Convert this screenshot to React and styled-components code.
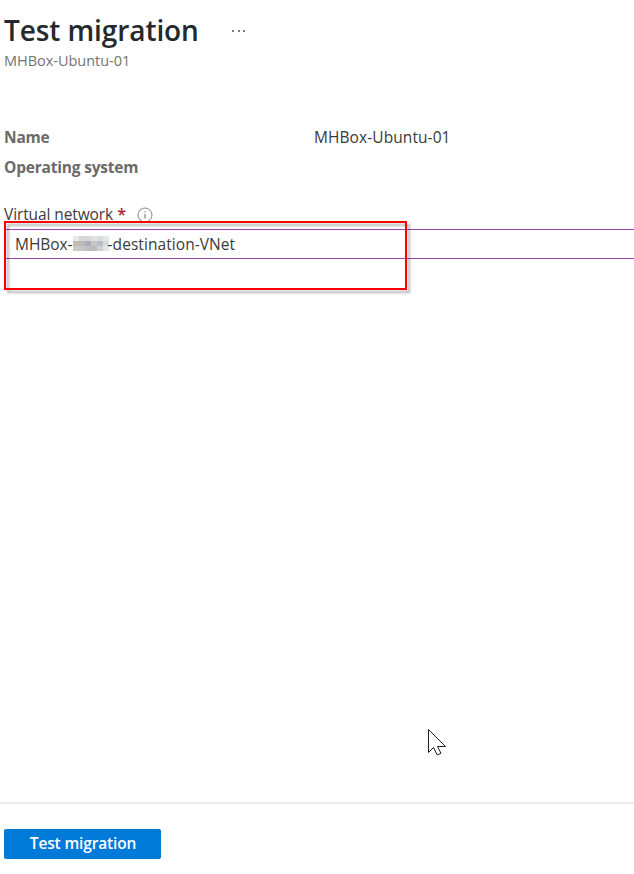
import React from 'react';
import styled, { createGlobalStyle } from 'styled-components';

const GlobalStyle = createGlobalStyle`
  * { box-sizing: border-box; }
  body { margin: 0; background: #fff; font-family: "Open Sans", "Noto Sans", sans-serif; color: #323130; }
`;

const Blade = styled.div`
  position: relative;
  display: flex;
  flex-direction: column;
  height: 874px;
  overflow: hidden;
  background: #fff;
`;

const Header = styled.header`
  display: flex;
  flex-direction: column;
  height: 122px;
  padding: 11px 0 0 4px;
`;

const TitleRow = styled.div`
  display: flex;
  align-items: center;
  height: 40px;
`;

const Text = styled.span`
  display: block;
  white-space: nowrap;
  font-size: ${(p) => p.$size}px;
  line-height: ${(p) => p.$line}px;
  font-weight: ${(p) => p.$weight || 400};
  letter-spacing: ${(p) => p.$track || 0}px;
  color: ${(p) => p.$color || '#3b3a39'};
`;

const Title = styled.h1`
  width: 227px;
  margin: 0;
  font-size: 28px;
  line-height: 38px;
  height: 40px;
  font-weight: 600;
  letter-spacing: -0.09px;
  color: #24292b;
  white-space: nowrap;
`;

const Details = styled.dl`
  display: grid;
  grid-template-columns: 310px 1fr;
  grid-auto-rows: 30px;
  margin: 0;
  padding-left: 4px;
`;

const Term = styled.dt`
  font-size: 15.5px;
  line-height: 30px;
  font-weight: 700;
  letter-spacing: -0.2px;
  color: #6b6a69;
`;

const Value = styled.dd`
  margin: 0;
`;

const Field = styled.section`
  position: relative;
  margin-top: 22px;
`;

const Label = styled.div`
  display: flex;
  height: 25px;
  padding-left: 4px;
`;

const Required = styled.span`
  width: 24px;
  padding-left: 4px;
  font-size: 16px;
  line-height: 21px;
  font-weight: 600;
  color: #a4262c;
`;

const InfoIcon = styled.svg`
  margin-top: 3px;
`;

const Input = styled.div`
  display: flex;
  align-items: center;
  height: 30px;
  margin-left: 4px;
  padding-left: 10px;
  border: 1px solid #9b45b0;
  border-right: 0;
`;

const Redaction = styled.svg`
  flex: none;
  margin-right: -1px;
`;

const Highlight = styled.div`
  position: absolute;
  left: 4px;
  top: 17px;
  width: 403px;
  height: 69px;
  border: 2px solid #fb0000;
  filter: drop-shadow(3px 3px 1px rgba(0, 0, 0, 0.3));
`;

const Footer = styled.footer`
  height: 72px;
  margin-top: auto;
  padding: 25px 4px 0;
  border-top: 2px solid #edebe9;
`;

const Button = styled.button`
  width: 157px;
  height: 30px;
  padding: 0 0 2px 1px;
  border: 0;
  border-radius: 2px;
  background: #007ad9;
  font-family: inherit;
  display: flex;
  justify-content: center;
  align-items: center;
`;

const Pointer = styled.svg`
  position: absolute;
  left: 427px;
  top: 728px;
`;

const mosaic = [
  ['#e7eaeb', '#d8d5d2', '#d5d8df', '#dfe1e5', '#d7dce0', '#e4e7e8'],
  ['#c3bcb4', '#b9b9b6', '#aeaebb', '#c8c5c2', '#b7c0c8', '#d7d9da'],
  ['#cec9c3', '#c5c7c8', '#bcbfc8', '#bdbbb9', '#cad1d4', '#e3e5e6'],
];

export default function App() {
  return (
    <>
      <GlobalStyle />
      <Blade>
        <Header>
          <TitleRow>
            <Title>Test migration</Title>
            <svg width="16" height="4" viewBox="0 0 16 4" fill="#7c7c7e">
              <rect x="1" y="1" width="2" height="2" />
              <rect x="7" y="1" width="2" height="2" />
              <rect x="12" y="1" width="2" height="2" />
            </svg>
          </TitleRow>
          <Text $size={14.5} $line={20} $track={-0.03} $color="#747372">MHBox-Ubuntu-01</Text>
        </Header>
        <Details>
          <Term>Name</Term>
          <Value><Text $size={15.5} $line={30} $track={0.08}>MHBox-Ubuntu-01</Text></Value>
          <Term>Operating system</Term>
          <Value />
        </Details>
        <Field>
          <Label>
            <Text $size={15.5} $line={20} $track={-0.1}>Virtual network</Text>
            <Required>*</Required>
            <InfoIcon width="16" height="16" viewBox="0 0 16 16">
              <circle cx="8" cy="8" r="7" fill="none" stroke="#858483" />
              <path d="M8 7v4.5M8 4.2v1.4" stroke="#858483" strokeWidth="1.2" />
            </InfoIcon>
          </Label>
          <Input>
            <Text $size={15.5} $line={28} $track={-0.05}>MHBox-</Text>
            <Redaction width="36" height="16" viewBox="0 0 36 16" shapeRendering="crispEdges">
              {mosaic.map((row, y) => row.map((color, x) => (
                <rect key={`${x}-${y}`} x={x * 6} y={y * 5} width="6" height="5" fill={color} />
              )))}
            </Redaction>
            <Text $size={15.5} $line={28} $track={0.07}>-destination-VNet</Text>
          </Input>
          <Highlight />
        </Field>
        <Footer>
          <Button><Text $size={15.5} $line={28} $weight={600} $track={-0.15} $color="#fff">Test migration</Text></Button>
        </Footer>
        <Pointer width="20" height="29" viewBox="0 0 20 29">
          <path d="M1.5 1.5V24.5L6.5 19.5L10.2 27L14 25.2L10.5 18.5H18.5Z" fill="#fff" stroke="#1e1e28" />
        </Pointer>
      </Blade>
    </>
  );
}
